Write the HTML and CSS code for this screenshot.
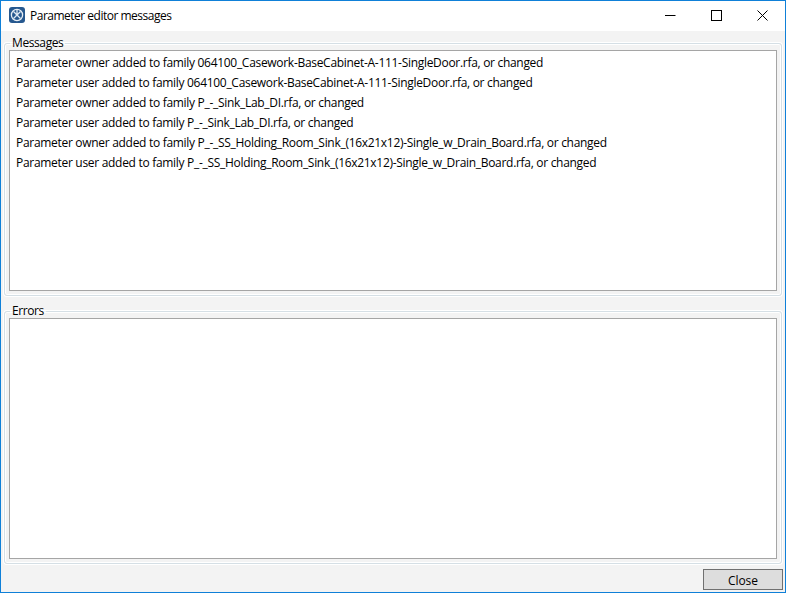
FILE: index.html
```html
<!DOCTYPE html>
<html lang="en">
<head>
<meta charset="utf-8">
<title>Parameter editor messages</title>
<link rel="stylesheet" href="styles.css">
</head>
<body>
<div class="window">
  <header class="titlebar">
    <svg class="app-icon" width="16" height="16" viewBox="0 0 16 16">
      <rect width="16" height="16" rx="3" fill="#26588f"/>
      <circle cx="8" cy="8" r="5.6" fill="none" stroke="#e8eff6" stroke-width="1.3"/>
      <path d="M4.5 4.5 11.5 11.5M11.5 4.5 4.5 11.5M8 3v4" fill="none" stroke="#dfe9f3" stroke-width="1.3"/>
    </svg>
    <span class="title">Parameter editor messages</span>
    <div class="controls">
      <span class="control"><svg width="11" height="11" viewBox="0 0 11 11"><path d="M0 5.5H10.5" stroke="#000" stroke-width="1" fill="none"/></svg></span>
      <span class="control"><svg width="11" height="11" viewBox="0 0 11 11"><rect x=".5" y=".5" width="10" height="10" stroke="#000" stroke-width="1" fill="none"/></svg></span>
      <span class="control"><svg width="11" height="11" viewBox="0 0 11 11"><path d="M.5 .5 10.5 10.5M10.5 .5 .5 10.5" stroke="#000" stroke-width="1" fill="none"/></svg></span>
    </div>
  </header>
  <main class="content">
    <fieldset class="group">
      <legend class="group-label">Messages</legend>
      <div class="list">
        <div class="row">Parameter owner added to family 064100_Casework-BaseCabinet-A-111-SingleDoor.rfa, or changed</div>
        <div class="row">Parameter user added to family 064100_Casework-BaseCabinet-A-111-SingleDoor.rfa, or changed</div>
        <div class="row">Parameter owner added to family P_-_Sink_Lab_DI.rfa, or changed</div>
        <div class="row">Parameter user added to family P_-_Sink_Lab_DI.rfa, or changed</div>
        <div class="row">Parameter owner added to family P_-_SS_Holding_Room_Sink_(16x21x12)-Single_w_Drain_Board.rfa, or changed</div>
        <div class="row">Parameter user added to family P_-_SS_Holding_Room_Sink_(16x21x12)-Single_w_Drain_Board.rfa, or changed</div>
      </div>
    </fieldset>
    <fieldset class="group">
      <legend class="group-label">Errors</legend>
      <div class="list"></div>
    </fieldset>
    <footer class="footer">
      <button class="close-button" type="button">Close</button>
    </footer>
  </main>
</div>
</body>
</html>
```
FILE: styles.css
```css
* { box-sizing: border-box; }
html, body { margin: 0; padding: 0; background: #fff; }
body { width: 789px; height: 593px; overflow: hidden; font-family: "Open Sans", "Liberation Sans", sans-serif; font-size: 12px; color: #000; }
.window { width: 786px; height: 593px; border: 1px solid #0f80d8; display: flex; flex-direction: column; background: #f3f3f3; }
.titlebar { height: 30px; flex: none; background: #fff; display: flex; align-items: center; padding: 0 0 2px 8px; }
.app-icon { flex: none; margin-right: 5px; }
.title { flex: 1; white-space: nowrap; letter-spacing: -0.5px; }
.controls { display: flex; align-items: center; }
.control { width: 46px; height: 28px; display: flex; align-items: center; justify-content: center; }
.content { flex: 1; min-height: 0; display: flex; flex-direction: column; padding: 5px 2px 0 3px; }
.group { margin: 0 1px 0 0; padding: 0 4px 4px 4px; height: 260px; min-width: 0; border: 1px solid #d5dfe5; border-radius: 3px; box-shadow: inset 0 0 0 1px #fff, 0 0 0 1px #fff; }
.group + .group { margin-top: 8px; }
.group-label { padding: 0 2px; margin-left: 1px; line-height: 14px; letter-spacing: -0.4px; }
.list { height: 241px; border: 1px solid #a5a5a5; background: #fff; padding-top: 2px; }
.row { height: 20px; line-height: 20px; padding-left: 6px; white-space: nowrap; letter-spacing: -0.3px; }
.footer { display: flex; justify-content: flex-end; padding-top: 5px; }
.close-button { width: 80px; height: 21px; padding: 3px 0 0; background: #dddddd; border: 1px solid #707070; font: inherit; line-height: 16px; letter-spacing: -0.1px; color: #000; }
```
